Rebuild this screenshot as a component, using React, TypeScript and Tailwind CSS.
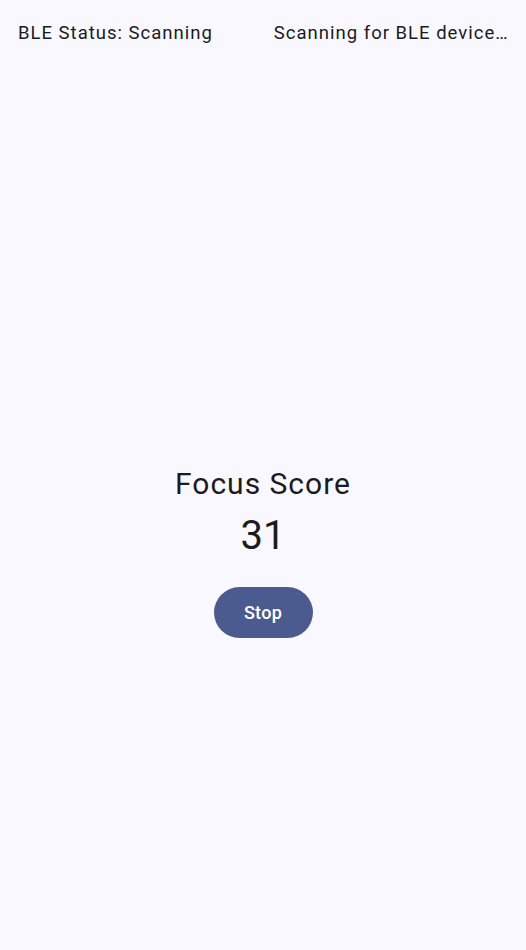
import React from "react";

export default function App() {
  return (
    <div
      className="w-[526px] h-[950px] bg-[#faf8ff] flex flex-col text-[#1b1b21]"
      style={{ fontFamily: "Roboto, 'Noto Sans', sans-serif" }}
    >
      <div className="flex items-center pl-[18px] pr-[18px] pt-[20px] gap-[61px]">
        <span className="text-[18.5px] leading-[26px] tracking-[1px] whitespace-nowrap shrink-0">
          BLE Status: Scanning
        </span>
        <span className="flex-1 text-[18.5px] leading-[26px] tracking-[1px] whitespace-nowrap overflow-hidden text-ellipsis min-w-0">
          Scanning for BLE devices...
        </span>
      </div>
      <div className="flex flex-col items-center mt-[420px]">
        <div className="text-[30px] leading-[36px] tracking-[1px]">Focus Score</div>
        <div className="text-[40px] leading-[52px] mt-[8px]">31</div>
        <button className="mt-[25px] w-[99px] h-[51px] rounded-full bg-[#4b5b8f] text-white text-[18px] tracking-[0.3px] font-medium">
          Stop
        </button>
      </div>
    </div>
  );
}
